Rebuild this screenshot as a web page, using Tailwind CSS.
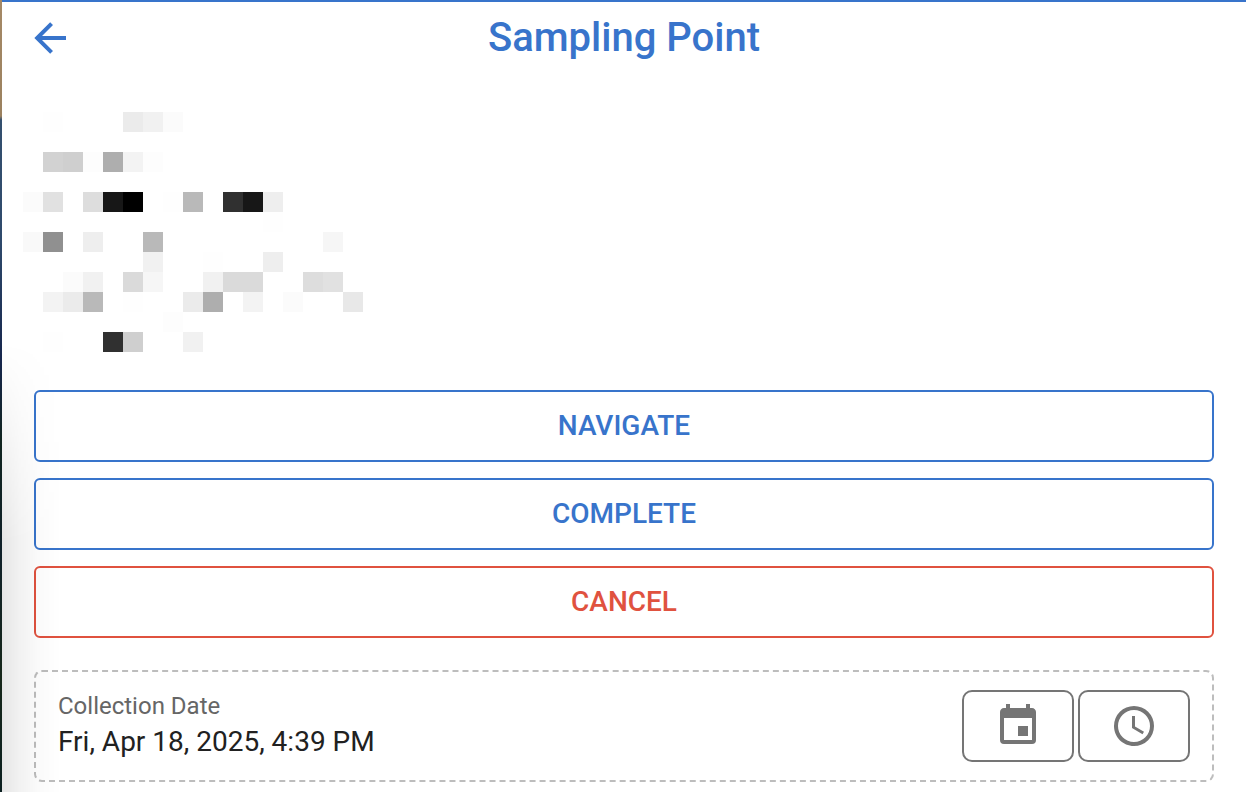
<!doctype html>
<html lang="en">
<head>
    <meta charset="UTF-8">
    <meta name="viewport" content="width=device-width, initial-scale=1.0">
    <script src="https://cdn.jsdelivr.net/npm/@tailwindcss/browser@4"></script>
    <title>Sampling Point</title>
</head>
<body class="flex min-h-screen bg-white font-[Roboto,sans-serif] text-[#212121]">
<!-- strip of the map behind the panel -->
<div class="w-[2px] shrink-0 bg-[linear-gradient(to_bottom,#a58966_0px,#9b815f_116px,#34506f_120px,#2f4a6c_240px,#16264d_360px,#10241f_440px,#0f2029_550px,#16271a_680px,#0b1f20_792px)]"></div>

<main class="relative flex-1 overflow-hidden border-t-2 border-[#3874cb]">
    <div class="pointer-events-none absolute bottom-0 left-0 top-[340px] w-[60px] bg-[linear-gradient(to_right,#0000001a,#0000000d_30%,#00000004_65%,transparent)] [mask-image:linear-gradient(to_bottom,transparent,black_200px)]"></div>

    <header class="grid h-[72px] grid-cols-[96px_1fr_96px] items-center text-[#3874cb]">
        <button type="button" aria-label="Back" class="ml-6 size-12">
            <svg viewBox="0 0 24 24" class="size-12 fill-current"><path d="M20,11V13H8L13.5,18.5L12.08,19.92L4.16,12L12.08,4.08L13.5,5.5L8,11H20Z"/></svg>
        </button>
        <h1 class="text-center text-[40px] font-medium leading-[48px]">Sampling Point</h1>
    </header>

    <!-- redacted point details -->
    <svg viewBox="0 0 17 12" width="340" height="240" class="ml-[21px] mt-[38px]" shape-rendering="crispEdges" role="img" aria-label="Hidden details">
        <path fill="#fefefe" d="M1 0h1v1h-1zM7 4h1v1h-1zM12 5h1v1h-1zM9 7h1v1h-1zM5 9h1v1h-1zM1 11h1v1h-1z"/>
        <path fill="#fdfdfd" d="M3 2h1v1h-1zM6 2h1v1h-1zM7 10h1v1h-1z"/>
        <path fill="#fbfbfb" d="M7 0h1v1h-1zM0 4h1v1h-1zM2 8h1v1h-1zM13 9h1v1h-1z"/>
        <path fill="#f9f9f9" d="M0 6h1v1h-1z"/>
        <path fill="#f6f6f6" d="M15 6h1v1h-1zM6 8h1v1h-1z"/>
        <path fill="#f3f3f3" d="M5 2h1v1h-1zM1 9h1v1h-1zM11 9h1v1h-1z"/>
        <path fill="#f1f1f1" d="M6 0h1v1h-1zM6 7h1v1h-1zM3 8h1v1h-1zM9 8h1v1h-1zM8 11h1v1h-1z"/>
        <path fill="#eeeeee" d="M12 4h1v1h-1zM3 6h1v1h-1zM12 7h1v1h-1z"/>
        <path fill="#ebebeb" d="M5 0h1v1h-1zM2 9h1v1h-1zM8 9h1v1h-1z"/>
        <path fill="#e8e8e8" d="M16 9h1v1h-1z"/>
        <path fill="#e1e1e1" d="M1 4h1v1h-1zM15 8h1v1h-1z"/>
        <path fill="#dddddd" d="M3 4h1v1h-1zM14 8h1v1h-1z"/>
        <path fill="#dadada" d="M5 8h1v1h-1zM10 8h1v1h-1zM11 8h1v1h-1z"/>
        <path fill="#d2d2d2" d="M1 2h1v1h-1z"/>
        <path fill="#cfcfcf" d="M2 2h1v1h-1zM5 11h1v1h-1z"/>
        <path fill="#b9b9b9" d="M8 4h1v1h-1zM6 6h1v1h-1zM3 9h1v1h-1z"/>
        <path fill="#aeaeae" d="M4 2h1v1h-1zM9 9h1v1h-1z"/>
        <path fill="#909090" d="M1 6h1v1h-1z"/>
        <path fill="#303030" d="M10 4h1v1h-1zM4 11h1v1h-1z"/>
        <path fill="#171717" d="M4 4h1v1h-1zM11 4h1v1h-1z"/>
        <path fill="#000000" d="M5 4h1v1h-1z"/>
    </svg>

    <div class="mx-8 mt-[38px] flex flex-col gap-4 text-[28px] font-medium leading-8">
        <button type="button" class="h-[72px] rounded-md border-2 border-[#3874cb] text-[#3874cb]">NAVIGATE</button>
        <button type="button" class="h-[72px] rounded-md border-2 border-[#3874cb] text-[#3874cb]">COMPLETE</button>
        <button type="button" class="h-[72px] rounded-md border-2 border-[#e0523f] text-[#e0523f]">CANCEL</button>
    </div>

    <section class="mx-8 mb-2 mt-8 flex items-center justify-between rounded-lg border-2 border-dashed border-[#bdbdbd] px-[22px] py-[18px]">
        <div>
            <p class="text-2xl leading-8 text-[#666666]">Collection Date</p>
            <p class="text-[28px] leading-10">Fri, Apr 18, 2025, 4:39 PM</p>
        </div>
        <div class="flex gap-1 text-[#757575]">
            <button type="button" aria-label="Pick date" class="flex h-[72px] w-[112px] items-center justify-center rounded-[10px] border-2 border-current">
                <svg viewBox="0 0 24 24" class="size-12 fill-current"><path d="M19,19H5V8H19M16,1V3H8V1H6V3H5C3.89,3 3,3.89 3,5V19A2,2 0 0,0 5,21H19A2,2 0 0,0 21,19V5C21,3.89 20.1,3 19,3H18V1M17,12H12V17H17V12Z"/></svg>
            </button>
            <button type="button" aria-label="Pick time" class="flex h-[72px] w-[112px] items-center justify-center rounded-[10px] border-2 border-current">
                <svg viewBox="0 0 24 24" class="size-12 fill-current"><path d="M12,20A8,8 0 0,0 20,12A8,8 0 0,0 12,4A8,8 0 0,0 4,12A8,8 0 0,0 12,20M12,2A10,10 0 0,1 22,12A10,10 0 0,1 12,22C6.47,22 2,17.5 2,12A10,10 0 0,1 12,2M12.5,7V12.25L17,14.92L16.25,16.15L11,13V7H12.5Z"/></svg>
            </button>
        </div>
    </section>
</main>
</body>
</html>
